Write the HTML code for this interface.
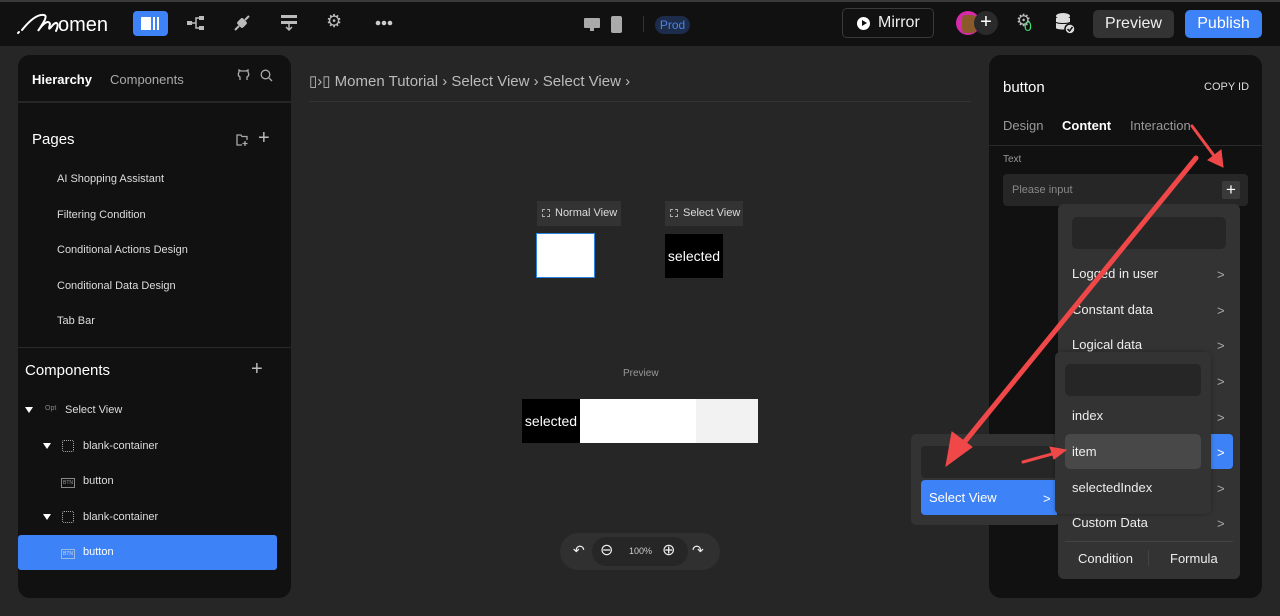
<!DOCTYPE html>
<html><head><meta charset="utf-8"><style>
*{box-sizing:border-box;margin:0;padding:0}
body{width:1280px;height:616px;overflow:hidden;background:#262626;font-family:"Liberation Sans",sans-serif;color:#ddd;position:relative}
.a{position:absolute}
.t{position:absolute;white-space:nowrap}
.chev{position:absolute;color:#aaa;font-size:13px}
.m{position:absolute;white-space:nowrap;font-size:13px;color:#eee}
</style></head><body>
<div class="a" style="left:0;top:0;width:1280px;height:46px;background:#111;border-top:2px solid #3a3a3a"></div>
<svg class="a" style="left:16px;top:10px" width="100" height="26" viewBox="0 0 100 26"><path d="M2 23 L3 22 M6 20 C14 10 22 4 28 5 C33 6 25 16 22 21 C28 12 33 10 34 14 C33 18 32 21 36 16 C40 11 44 12 40 21" stroke="#fff" stroke-width="2" fill="none" stroke-linecap="round"/><text x="42" y="21" fill="#fff" font-size="20" font-family="Liberation Sans">omen</text></svg>
<div class="a" style="left:133px;top:11px;width:35px;height:25px;background:#3d82f6;border-radius:4px"></div>
<div class="a" style="left:141px;top:17px;width:10px;height:13px;background:#fff"></div>
<div class="a" style="left:153px;top:17px;width:2px;height:13px;background:#fff"></div>
<div class="a" style="left:157px;top:17px;width:2px;height:13px;background:#fff"></div>
<svg class="a" style="left:186px;top:14px" width="20" height="18" viewBox="0 0 20 18"><rect x="1" y="7" width="5" height="4" fill="#bbb"/><rect x="13" y="2" width="5" height="4" fill="#bbb"/><rect x="13" y="12" width="5" height="4" fill="#bbb"/><path d="M6 9H10V4H13M10 9V14H13" stroke="#bbb" stroke-width="1.5" fill="none"/></svg>
<svg class="a" style="left:232px;top:13px" width="20" height="20" viewBox="0 0 20 20"><path d="M3 17L7 13M13 7L17 3" stroke="#bbb" stroke-width="2"/><rect x="6" y="6" width="8" height="8" rx="2" transform="rotate(45 10 10)" fill="#bbb"/></svg>
<svg class="a" style="left:280px;top:13px" width="18" height="20" viewBox="0 0 18 20"><rect x="1" y="2" width="16" height="3" fill="#bbb"/><rect x="1" y="8" width="16" height="3" fill="#bbb"/><path d="M9 11V17M6 14L9 17L12 14" stroke="#bbb" stroke-width="1.5" fill="none"/></svg>
<div class="t" style="left:326px;top:11px;color:#bbb;font-size:18px">⚙</div>
<svg class="a" style="left:375px;top:20px" width="18" height="6"><circle cx="3" cy="3" r="2.3" fill="#ccc"/><circle cx="9" cy="3" r="2.3" fill="#ccc"/><circle cx="15" cy="3" r="2.3" fill="#ccc"/></svg>
<div class="a" style="left:584px;top:18px;width:16px;height:10px;background:#aaa;border-radius:1px"></div>
<div class="a" style="left:590px;top:28px;width:4px;height:3px;background:#aaa"></div>
<div class="a" style="left:611px;top:16px;width:11px;height:17px;background:#aaa;border-radius:2px"></div>
<div class="a" style="left:643px;top:16px;width:1px;height:16px;background:#333"></div>
<div class="t" style="left:655px;top:16px;width:35px;height:18px;background:#1c2c4a;border-radius:9px;color:#4b84e6;font-size:12px;text-align:center;line-height:18px">Prod</div>
<div class="a" style="left:842px;top:8px;width:92px;height:30px;border:1px solid #3a3a3a;border-radius:5px"></div>
<div class="a" style="left:857px;top:17px;width:13px;height:13px;border-radius:50%;background:#fff"></div>
<div class="a" style="left:862px;top:20px;width:0;height:0;border-left:5px solid #111;border-top:3.5px solid transparent;border-bottom:3.5px solid transparent"></div>
<div class="t" style="left:878px;top:14px;color:#eee;font-size:16px">Mirror</div>
<div class="a" style="left:956px;top:11px;width:24px;height:24px;border-radius:50%;background:#d62aa8"></div>
<div class="a" style="left:962px;top:15px;width:14px;height:18px;border-radius:4px;background:#8a5a2a"></div>
<div class="t" style="left:974px;top:11px;width:24px;height:24px;border-radius:50%;background:#2a2a2a;color:#fff;font-size:20px;text-align:center;line-height:23px">+</div>
<div class="t" style="left:1016px;top:11px;color:#bbb;font-size:17px">⚙</div>
<div class="t" style="left:1024px;top:18px;color:#3ee07a;font-size:14px">0</div>
<svg class="a" style="left:1055px;top:12px" width="22" height="24" viewBox="0 0 22 24"><ellipse cx="8" cy="4" rx="7" ry="3" fill="#ddd"/><path d="M1 6V16C1 18 15 18 15 16V6" fill="#ddd"/><path d="M1 10C1 12 15 12 15 10" stroke="#111" fill="none"/><circle cx="15" cy="17" r="5" fill="#ddd" stroke="#111" stroke-width="1.5"/><path d="M12.5 17L14.5 19L17.5 15" stroke="#111" stroke-width="1.5" fill="none"/></svg>
<div class="t" style="left:1093px;top:10px;width:81px;height:28px;background:#333;border-radius:5px;color:#eee;font-size:16px;text-align:center;line-height:28px">Preview</div>
<div class="t" style="left:1185px;top:10px;width:77px;height:28px;background:#3d82f6;border-radius:5px;color:#fff;font-size:16px;text-align:center;line-height:28px">Publish</div>

<div class="a" style="left:18px;top:55px;width:273px;height:543px;background:#111;border-radius:12px"></div>
<div class="a" style="left:18px;top:101px;width:273px;height:2px;background:#262626"></div>
<div class="t" style="left:32px;top:72px;color:#fff;font-size:13px;font-weight:bold">Hierarchy</div>
<div class="t" style="left:110px;top:72px;color:#aaa;font-size:13px">Components</div>
<svg class="a" style="left:237px;top:69px" width="13" height="13" viewBox="0 0 13 13"><path d="M3 11V8C1 7 1 5 2 3V1L4 2H9L11 1V3C12 5 12 7 10 8V11" stroke="#aaa" stroke-width="1.3" fill="none"/></svg>
<svg class="a" style="left:260px;top:69px" width="13" height="13"><circle cx="5.5" cy="5.5" r="4.3" stroke="#aaa" stroke-width="1.3" fill="none"/><path d="M9 9L12 12" stroke="#aaa" stroke-width="1.3"/></svg>
<div class="t" style="left:32px;top:131px;color:#fff;font-size:15px">Pages</div>
<svg class="a" style="left:235px;top:133px" width="14" height="14"><path d="M7 12H2V2H6L7 3.5H12V7" stroke="#aaa" stroke-width="1.3" fill="none"/><path d="M10 8V13M7.5 10.5H12.5" stroke="#aaa" stroke-width="1.3"/></svg>
<div class="t" style="left:258px;top:127px;color:#bbb;font-size:20px">+</div>
<div class="t" style="left:57px;top:173px;font-size:11px;color:#ddd">AI Shopping Assistant</div>
<div class="t" style="left:57px;top:209px;font-size:11px;color:#ddd">Filtering Condition</div>
<div class="t" style="left:57px;top:244px;font-size:11px;color:#ddd">Conditional Actions Design</div>
<div class="t" style="left:57px;top:280px;font-size:11px;color:#ddd">Conditional Data Design</div>
<div class="t" style="left:57px;top:315px;font-size:11px;color:#ddd">Tab Bar</div>
<div class="a" style="left:18px;top:347px;width:273px;height:1px;background:#2a2a2a"></div>
<div class="t" style="left:25px;top:362px;color:#fff;font-size:15px">Components</div>
<div class="t" style="left:251px;top:358px;color:#bbb;font-size:20px">+</div>
<svg class="a" style="left:25px;top:407px" width="8" height="6"><path d="M0 0H8L4 6Z" fill="#fff"/></svg>
<div class="t" style="left:45px;top:405px;font-size:7px;color:#888">Opt</div>
<div class="t" style="left:65px;top:404px;font-size:11px">Select View</div>
<svg class="a" style="left:43px;top:443px" width="8" height="6"><path d="M0 0H8L4 6Z" fill="#fff"/></svg>
<div class="a" style="left:62px;top:440px;width:12px;height:12px;border:1px dotted #aaa;border-radius:2px"></div>
<div class="t" style="left:83px;top:440px;font-size:11px">blank-container</div>
<div class="t" style="left:61px;top:478px;font-size:5px;color:#999;border:1px solid #888;padding:1px">BTN</div>
<div class="t" style="left:83px;top:475px;font-size:11px">button</div>
<svg class="a" style="left:43px;top:514px" width="8" height="6"><path d="M0 0H8L4 6Z" fill="#fff"/></svg>
<div class="a" style="left:62px;top:511px;width:12px;height:12px;border:1px dotted #aaa;border-radius:2px"></div>
<div class="t" style="left:83px;top:511px;font-size:11px">blank-container</div>
<div class="a" style="left:18px;top:535px;width:259px;height:35px;background:#3d82f6;border-radius:3px"></div>
<div class="t" style="left:61px;top:549px;font-size:5px;color:#cde;border:1px solid #9bd;padding:1px">BTN</div>
<div class="t" style="left:83px;top:546px;font-size:11px;color:#fff">button</div>

<div class="t" style="left:309px;top:72px;color:#bbb;font-size:15px">▯›▯ Momen Tutorial › Select View › Select View ›</div>
<div class="a" style="left:309px;top:101px;width:662px;height:1px;background:#333"></div>
<div class="t" style="left:537px;top:201px;width:84px;height:25px;background:#333;font-size:11px;color:#ddd;line-height:25px;padding-left:18px">Normal View</div>
<div class="t" style="left:665px;top:201px;width:78px;height:25px;background:#333;font-size:11px;color:#ddd;line-height:25px;padding-left:18px">Select View</div>
<div class="a" style="left:542px;top:209px;width:8px;height:8px;border:1px dashed #aaa"></div>
<div class="a" style="left:670px;top:209px;width:8px;height:8px;border:1px dashed #aaa"></div>
<div class="a" style="left:536px;top:233px;width:59px;height:45px;background:#fff;border:1px solid #2b82e0"></div>
<div class="t" style="left:665px;top:234px;width:58px;height:44px;background:#000;color:#fff;font-size:14px;line-height:44px;text-align:center">selected</div>
<div class="t" style="left:623px;top:368px;font-size:10px;color:#999">Preview</div>
<div class="t" style="left:522px;top:399px;width:58px;height:44px;background:#000;color:#fff;font-size:14px;line-height:44px;text-align:center">selected</div>
<div class="a" style="left:580px;top:399px;width:116px;height:44px;background:#fff"></div>
<div class="a" style="left:696px;top:399px;width:62px;height:44px;background:#f2f2f2"></div>
<div class="a" style="left:560px;top:533px;width:160px;height:37px;background:#303030;border-radius:19px"></div>
<div class="a" style="left:592px;top:537px;width:96px;height:29px;background:#262626;border-radius:15px"></div>
<div class="t" style="left:573px;top:542px;color:#eee;font-size:14px">↶</div>
<div class="t" style="left:600px;top:540px;color:#eee;font-size:16px">⊖</div>
<div class="t" style="left:629px;top:546px;color:#ccc;font-size:9px">100%</div>
<div class="t" style="left:662px;top:540px;color:#eee;font-size:16px">⊕</div>
<div class="t" style="left:692px;top:542px;color:#eee;font-size:14px">↷</div>

<div class="a" style="left:989px;top:55px;width:273px;height:543px;background:#111;border-radius:12px"></div>
<div class="t" style="left:1003px;top:79px;color:#fff;font-size:15px">button</div>
<div class="t" style="left:1204px;top:81px;color:#ddd;font-size:11px">COPY ID</div>
<div class="t" style="left:1003px;top:118px;color:#999;font-size:13px">Design</div>
<div class="t" style="left:1062px;top:118px;color:#fff;font-size:13px;font-weight:bold">Content</div>
<div class="t" style="left:1130px;top:118px;color:#999;font-size:13px">Interaction</div>
<div class="a" style="left:989px;top:145px;width:273px;height:1px;background:#2a2a2a"></div>
<div class="t" style="left:1003px;top:154px;color:#999;font-size:10px">Text</div>
<div class="a" style="left:1003px;top:174px;width:245px;height:32px;background:#262626;border-radius:4px"></div>
<div class="t" style="left:1012px;top:184px;color:#888;font-size:11px">Please input</div>
<div class="t" style="left:1222px;top:181px;width:18px;height:18px;background:#3a3a3a;border-radius:2px;color:#fff;font-size:17px;line-height:18px;text-align:center">+</div>

<div class="a" style="left:1058px;top:204px;width:182px;height:375px;background:#333;border-radius:6px"></div>
<div class="a" style="left:1072px;top:217px;width:154px;height:32px;background:#262626;border-radius:5px"></div>
<div class="m" style="left:1072px;top:266px">Logged in user</div>
<div class="m" style="left:1072px;top:302px">Constant data</div>
<div class="m" style="left:1072px;top:337px">Logical data</div>
<div class="m" style="left:1072px;top:515px">Custom Data</div>
<div class="chev" style="left:1217px;top:267px">&gt;</div>
<div class="chev" style="left:1217px;top:303px">&gt;</div>
<div class="chev" style="left:1217px;top:338px">&gt;</div>
<div class="chev" style="left:1217px;top:374px">&gt;</div>
<div class="chev" style="left:1217px;top:410px">&gt;</div>
<div class="a" style="left:1180px;top:434px;width:53px;height:35px;background:#3d82f6;border-radius:4px"></div>
<div class="chev" style="left:1217px;top:445px;color:#fff">&gt;</div>
<div class="chev" style="left:1217px;top:481px">&gt;</div>
<div class="chev" style="left:1217px;top:516px">&gt;</div>
<div class="a" style="left:1065px;top:541px;width:168px;height:1px;background:#444"></div>
<div class="a" style="left:1148px;top:550px;width:1px;height:16px;background:#444"></div>
<div class="m" style="left:1078px;top:551px">Condition</div>
<div class="m" style="left:1170px;top:551px">Formula</div>

<div class="a" style="left:911px;top:434px;width:149px;height:91px;background:#333;border-radius:5px"></div>
<div class="a" style="left:921px;top:446px;width:140px;height:32px;background:#262626;border-radius:4px"></div>
<div class="a" style="left:921px;top:480px;width:136px;height:35px;background:#3d82f6;border-radius:4px 0 0 4px"></div>
<div class="m" style="left:929px;top:490px;color:#fff">Select View</div>
<div class="chev" style="left:1043px;top:491px;color:#fff">&gt;</div>

<div class="a" style="left:1055px;top:352px;width:156px;height:162px;background:#333;border-radius:5px;box-shadow:0 0 4px rgba(0,0,0,.3)"></div>
<div class="a" style="left:1065px;top:364px;width:136px;height:32px;background:#262626;border-radius:5px"></div>
<div class="m" style="left:1072px;top:408px">index</div>
<div class="a" style="left:1065px;top:434px;width:136px;height:35px;background:#484848;border-radius:5px"></div>
<div class="m" style="left:1072px;top:444px">item</div>
<div class="m" style="left:1072px;top:480px">selectedIndex</div>

<svg class="a" style="left:0;top:0" width="1280" height="616">
<g fill="#f04848" stroke="#f04848" stroke-linecap="round">
<line x1="1196" y1="158" x2="958" y2="450" stroke-width="5"/>
<polygon points="946,466 952,432 972,447" stroke-width="1"/>
<line x1="1192" y1="126" x2="1215" y2="157" stroke-width="3"/>
<polygon points="1223,167 1208,160 1221,150" stroke-width="1"/>
<line x1="1023" y1="462" x2="1052" y2="454" stroke-width="3"/>
<polygon points="1066,450 1050,447 1054,459" stroke-width="1"/>
</g></svg>
</body></html>
